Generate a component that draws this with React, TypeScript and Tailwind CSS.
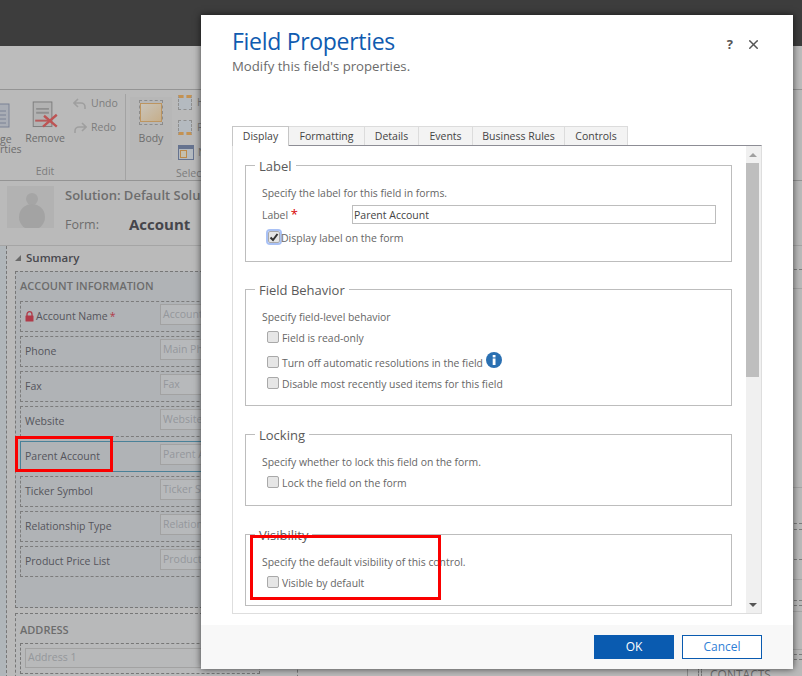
import type { ReactNode } from "react";
import { X } from "lucide-react";

const font = "font-['Open_Sans','Noto_Sans',sans-serif]";

const bgFields = [
  { label: "Account Name", hint: "Account", lock: true },
  { label: "Phone", hint: "Main Ph" },
  { label: "Fax", hint: "Fax" },
  { label: "Website", hint: "Website" },
  { label: "Parent Account", hint: "Parent A", active: true },
  { label: "Ticker Symbol", hint: "Ticker S" },
  { label: "Relationship Type", hint: "Relation" },
  { label: "Product Price List", hint: "Product" },
];

// form rows that peek out to the right of the dialog: height + line under it
const stripRows: [number, boolean][] = [
  [24, true],
  [19, false],
  [199, false],
  [36, true],
  [6, true],
  [30, true],
  [20, false],
  [21, true],
  [5, true],
  [6, false],
  [38, false],
  [5, true],
  [5, true],
];

const tabs = [
  { name: "Formatting", width: "w-[76px]" },
  { name: "Details", width: "w-[54px]" },
  { name: "Events", width: "w-[54px]" },
  { name: "Business Rules", width: "w-[92px]" },
  { name: "Controls", width: "w-[63px]" },
];

function Lock() {
  return (
    <svg width="9" height="11" viewBox="0 0 9 11" className="mr-[2px] shrink-0">
      <path d="M2 5V3.2a2.5 2.5 0 0 1 5 0V5" fill="none" stroke="#b03a48" strokeWidth="1.3" />
      <rect x="0.5" y="4.5" width="8" height="6" rx="0.5" fill="#b03a48" />
    </svg>
  );
}

function BackgroundField({ label, hint, lock, active }: { label: string; hint: string; lock?: boolean; active?: boolean }) {
  return (
    <div
      className={`flex h-[31px] items-center pl-[4px] ${
        active ? "border border-[#4a8198]" : "border border-dashed border-[#7c7c7c]"
      }`}
    >
      <span className="flex w-[135px] shrink-0 items-center text-[10.5px] text-[#55555c]">
        {lock && <Lock />}
        {label}
        {lock && <span className="ml-[2px] text-[#b03a48]">*</span>}
      </span>
      <div className="-mt-[4px] flex h-[21px] w-[60px] shrink-0 items-center border border-[#a2a2a2] bg-[#b7b9bb] pl-[2px] text-[10.5px] text-[#94979b]">
        {hint}
      </div>
    </div>
  );
}

function Background() {
  return (
    <div className={`flex h-[676px] flex-col overflow-hidden bg-[#bababa] ${font}`}>
      <div className="h-[46px] shrink-0 bg-[#3d3d3d]" />
      <div className="h-[43px] shrink-0 bg-[#bcbcbc]" />
      <div className="flex h-[92px] shrink-0 border-y border-[#949494] text-[10.5px] text-[#6d6d6d]">
        <div className="w-[26px] shrink-0 overflow-hidden pt-[13px] leading-[10px]">
          <svg width="10" height="25" viewBox="0 0 10 25" className="block">
            <rect x="-4" y="1" width="13" height="23" fill="#a9adb5" stroke="#7b8295" />
            <path d="M0 8h6M0 12h6M0 16h6M0 20h6" stroke="#7b8295" />
          </svg>
          <div className="mt-[6px] whitespace-nowrap">ge</div>
          <div className="whitespace-nowrap">rties</div>
        </div>
        <div className="flex w-[38px] shrink-0 flex-col items-center pt-[11px]">
          <svg width="27" height="28" viewBox="0 0 27 28">
            <rect x="1" y="1" width="19" height="25" fill="#b2b2b2" stroke="#7e7e7e" />
            <path d="M4 8h13M4 12h13" stroke="#8f8f8f" strokeWidth="2" />
            <path d="M3 20h16" stroke="#b65b5b" strokeWidth="2" />
            <path d="M11 26 25 14M12 15l13 11" stroke="#bd5454" strokeWidth="2.4" />
          </svg>
          <span className="mt-[2px]">Remove</span>
          <span className="mt-[18px] text-[#7c7c7c]">Edit</span>
        </div>
        <div className="flex w-[61px] shrink-0 flex-col gap-[8px] pl-[9px] pt-[6px] text-[#7d7d7d]">
          <span className="flex items-center gap-[4px]">
            <svg width="14" height="12" viewBox="0 0 14 12">
              <path d="M5 1 1 5l4 4M1 5h7a4 4 0 0 1 4 4v2" fill="none" stroke="#9f9f9f" strokeWidth="1.6" />
            </svg>
            Undo
          </span>
          <span className="flex items-center gap-[4px]">
            <svg width="14" height="12" viewBox="0 0 14 12">
              <path d="M9 1l4 4-4 4M13 5H6a4 4 0 0 0-4 4v2" fill="none" stroke="#9f9f9f" strokeWidth="1.6" />
            </svg>
            Redo
          </span>
        </div>
        <div className="mt-[4px] flex w-[47px] shrink-0 flex-col items-start border-l border-[#a3a3a3] pl-[4px] pt-[3px]">
          <div className="flex h-[63px] w-[42px] flex-col items-center bg-[#b7b7b7] pt-[3px]">
            <div className="h-[25px] w-[24px] border border-dashed border-[#8c8c8c] py-[2px]">
              <div className="h-full border border-[#bd9560] bg-gradient-to-br from-[#c9c4ba] to-[#c6ae8a]" />
            </div>
            <span className="mt-[6px]">Body</span>
          </div>
        </div>
        <div className="flex flex-col gap-[9px] pl-[6px] pt-[5px] text-[#7d7d7d]">
          <div className="flex items-center gap-[5px]">
            <div className="h-[15px] w-[14px] border border-dashed border-[#8f8f8f] border-t-[3px] border-t-[#c49252] bg-[#b4bac0]" />
            H
          </div>
          <div className="flex items-center gap-[5px]">
            <div className="h-[15px] w-[14px] border border-dashed border-[#8f8f8f] border-b-[3px] border-b-[#c49252] bg-[#b4bac0]" />
            F
          </div>
          <div className="flex items-center gap-[4px]">
            <div className="flex h-[15px] w-[16px] border border-t-[4px] border-[#66738f] bg-[#b4bac0] pl-[1px] pt-[1px]">
              <div className="h-[8px] w-[7px] border border-[#bd8a4a] bg-[#c4bfae]" />
            </div>
            N
          </div>
          <span className="-mt-[3px] -ml-[2px] text-[#7c7c7c]">Select</span>
        </div>
      </div>
      <div className="flex h-[64px] shrink-0 pl-[7px] pt-[5px]">
        <div className="relative h-[42px] w-[47px] overflow-hidden bg-[#b2b2b2]">
          <div className="absolute left-[19px] top-[7px] h-[12px] w-[12px] rounded-full bg-[#a5a5a5]" />
          <div className="absolute left-[12px] top-[18px] h-[26px] w-[26px] rounded-full bg-[#a3a3a3]" />
        </div>
        <div className="ml-[11px] font-semibold text-[#6d6d6d]">
          <div className="mt-[1px] whitespace-nowrap text-[13px] leading-[17px]">Solution: Default Solu</div>
          <div className="mt-[9px] flex items-center">
            <span className="w-[64px] pt-[3px] text-[12.5px] font-normal">Form:</span>
            <span className="text-[15px] font-bold leading-[20px] text-[#45454b]">Account</span>
          </div>
        </div>
      </div>
      <div className="flex grow border-t border-[#a5a5a5]">
        <div className="h-full w-[7px] border-r border-dashed border-[#777777] bg-[#b0b6ba]" />
        <div className="flex w-[680px] shrink-0 flex-col pl-[8px]">
          <div className="flex h-[25px] items-center gap-[5px] pb-[2px]">
            <div className="h-0 w-0 border-b-[6px] border-l-[6px] border-b-[#6a6a6a] border-l-transparent" />
            <span className="text-[11.5px] font-semibold text-[#48484e]">Summary</span>
          </div>
          <div className="h-[337px] w-[283px] border border-dashed border-[#777777] bg-[#b0b3b6] pl-[4px]">
            <div className="flex h-[29px] items-center text-[11px] font-semibold text-[#6c6c6c]">ACCOUNT INFORMATION</div>
            <div className="flex w-[240px] flex-col gap-[4px]">
              {bgFields.map((f) => (
                <BackgroundField key={f.label} {...f} />
              ))}
            </div>
          </div>
          <div className="mt-[5px] h-[70px] w-[283px] border border-dashed border-[#777777] bg-[#b8b9ba] pl-[4px]">
            <div className="flex h-[29px] items-center pt-[4px] text-[11px] font-semibold text-[#6c6c6c]">ADDRESS</div>
            <div className="h-[31px] w-[240px] border border-dashed border-[#777777] p-[4px]">
              <div className="flex h-[20px] items-center border border-[#a2a2a2] pl-[2px] text-[10.5px] text-[#94979b]">Address 1</div>
            </div>
          </div>
        </div>
        <div className="flex grow flex-col border-l border-[#8c8c8c]">
          {stripRows.map(([h, dashed], i) => (
            <div
              key={i}
              className={dashed ? "shrink-0 border-b border-dashed border-[#7c7c7c]" : "shrink-0 border-b border-[#a5a5a5]"}
              style={{ height: h }}
            />
          ))}
          <div className="mt-[7px] flex items-start pl-[10px] text-[12px] leading-[16px] text-[#6c6c6c]">
            <div className="mr-[2px] h-[10px] w-0 border-l border-dashed border-[#777777]" />
            <div className="mr-[8px] h-[10px] w-0 border-l border-dashed border-[#777777]" />
            CONTACTS
          </div>
        </div>
      </div>
    </div>
  );
}

function Check({ checked, focused }: { checked?: boolean; focused?: boolean }) {
  return (
    <span
      className={`flex h-[12px] w-[12px] shrink-0 items-center justify-center rounded-[2px] border border-[#a9a9a9] bg-[#e6e6e6] ${
        focused ? "outline-2 outline-[#a9c1f5]" : ""
      }`}
    >
      {checked && (
        <svg width="10" height="9" viewBox="0 0 10 9">
          <path d="M1.5 4.5 4 7 8.5 1" fill="none" stroke="#333" strokeWidth="2" />
        </svg>
      )}
    </span>
  );
}

function Group({ title, height, children }: { title: string; height: string; children: ReactNode }) {
  return (
    <fieldset className={`${height} border border-[#bdbdbd] pl-[16px]`}>
      <legend className="-ml-[7px] px-[4px] text-[13px] leading-[18px] text-[#5a5a5a]">
        <span className="block translate-y-[1px]">{title}</span>
      </legend>
      {children}
    </fieldset>
  );
}

function Option({ label, children }: { label: string; children?: ReactNode }) {
  return (
    <label className="flex items-center gap-[3px] pl-[5px] text-[10.4px] leading-[15px] text-[#666666]">
      <span className="-mt-[4px]">
        <Check />
      </span>
      {label}
      {children}
    </label>
  );
}

const hint = "text-[10.4px] leading-[15px] text-[#666666]";

function Dialog() {
  return (
    <div
      className={`absolute left-[201px] top-[15px] flex h-[654px] w-[592px] flex-col bg-white shadow-[0_0_7px_rgba(0,0,0,0.65)] ${font}`}
    >
      <div className="relative h-[111px] shrink-0 pl-[31px] pt-[10px]">
        <h1 className="text-[23px] leading-[32px] tracking-[-0.3px] text-[#0f5bb0]">Field Properties</h1>
        <p className="mt-[1px] text-[13.2px] leading-[17px] text-[#6b6b6b]">Modify this field's properties.</p>
        <div className="absolute right-[32px] top-[21px] flex items-center gap-[13px] text-[#555555]">
          <span className="text-[13px] font-bold leading-[16px]">?</span>
          <X size={15} strokeWidth={2.4} />
        </div>
      </div>
      <div className="flex h-[19px] shrink-0 pl-[31px] text-[10.5px] text-[#444444]">
        <div className="z-10 flex h-[20px] w-[57px] items-center justify-center border border-b-0 border-[#c6c6c6] bg-white pt-[1px]">
          Display
        </div>
        {tabs.map((t) => (
          <div
            key={t.name}
            className={`flex h-[19px] ${t.width} items-center justify-center border border-b-0 border-l-0 border-[#dcdcdc] bg-[#f3f3f3] pt-[1px]`}
          >
            {t.name}
          </div>
        ))}
      </div>
      <div className="ml-[31px] flex h-[469px] w-[530px] shrink-0 border border-[#dedede] border-t-[#8d8d95]">
        <div className="flex w-[513px] shrink-0 flex-col pl-[12px] pr-[14px] pt-[10px]">
          <Group title="Label" height="h-[106px]">
            <p className={`${hint} mt-[12px]`}>Specify the label for this field in forms.</p>
            <div className="mt-[4px] flex items-center pr-[15px]">
              <span className={`${hint} w-[90px]`}>
                Label <span className="text-[13px] text-[#d70000]">*</span>
              </span>
              <input
                readOnly
                value="Parent Account"
                className="h-[19px] grow border border-[#bdbdbd] pl-[1px] text-[10.5px] text-[#444444] outline-none"
              />
            </div>
            <div className="mt-[7px] flex items-center pl-[6px] text-[10.5px] text-[#666666]">
              <span className="-mt-[3px]">
                <Check checked focused />
              </span>
              <span className="ml-[1px]">Display label on the form</span>
            </div>
          </Group>
          <div className="mt-[18px]">
            <Group title="Field Behavior" height="h-[126px]">
              <p className={`${hint} mt-[12px]`}>Specify field-level behavior</p>
              <div className="mt-[6px]">
                <Option label="Field is read-only" />
              </div>
              <div className="mt-[10px]">
                <Option label="Turn off automatic resolutions in the field">
                  <svg width="16" height="16" viewBox="0 0 16 16" className="-mb-[5px] -mt-[13px]">
                    <circle cx="8" cy="8" r="8" fill="#2a70b2" />
                    <rect x="6.7" y="6.5" width="2.8" height="6.5" fill="#fff" />
                    <rect x="6.7" y="3" width="2.8" height="2.4" fill="#fff" />
                  </svg>
                </Option>
              </div>
              <div className="mt-[6px]">
                <Option label="Disable most recently used items for this field" />
              </div>
            </Group>
          </div>
          <div className="mt-[19px]">
            <Group title="Locking" height="h-[81px]">
              <p className={`${hint} mt-[12px]`}>Specify whether to lock this field on the form.</p>
              <div className="mt-[6px]">
                <Option label="Lock the field on the form" />
              </div>
            </Group>
          </div>
          <div className="mt-[19px]">
            <Group title="Visibility" height="h-[81px]">
              <p className={`${hint} mt-[12px]`}>Specify the default visibility of this control.</p>
              <div className="mt-[6px]">
                <Option label="Visible by default" />
              </div>
            </Group>
          </div>
        </div>
        <div className="flex w-[15px] shrink-0 flex-col items-center bg-[#f0f0f0] pr-[2px]">
          <div className="mb-[6px] mt-[7px] h-0 w-0 border-x-[4px] border-b-[4px] border-x-transparent border-b-[#a0a0a0]" />
          <div className="h-[214px] w-[13px] bg-[#bebebe]" />
          <div className="mt-auto mb-[6px] h-0 w-0 border-x-[4px] border-t-[4px] border-x-transparent border-t-[#555555]" />
        </div>
      </div>
      <div className="mt-auto flex h-[44px] items-center justify-end gap-[8px] bg-[#f8f8f8] pr-[31px]">
        <button className="h-[24px] w-[80px] border border-[#0a5bb0] bg-[#0a5bb0] text-[12px] text-white">OK</button>
        <button className="h-[24px] w-[80px] border border-[#0a5bb0] bg-white text-[12px] text-[#2f7fd6]">Cancel</button>
      </div>
    </div>
  );
}

export default function App() {
  return (
    <div className="relative h-[676px] w-[802px] overflow-hidden">
      <Background />
      <Dialog />
      {/* red annotation boxes */}
      <div className="absolute left-[15px] top-[436px] h-[36px] w-[98px] border-[3px] border-[#fa0000]" />
      <div className="absolute left-[250px] top-[535px] h-[65px] w-[191px] border-[3px] border-[#fa0000]" />
    </div>
  );
}
